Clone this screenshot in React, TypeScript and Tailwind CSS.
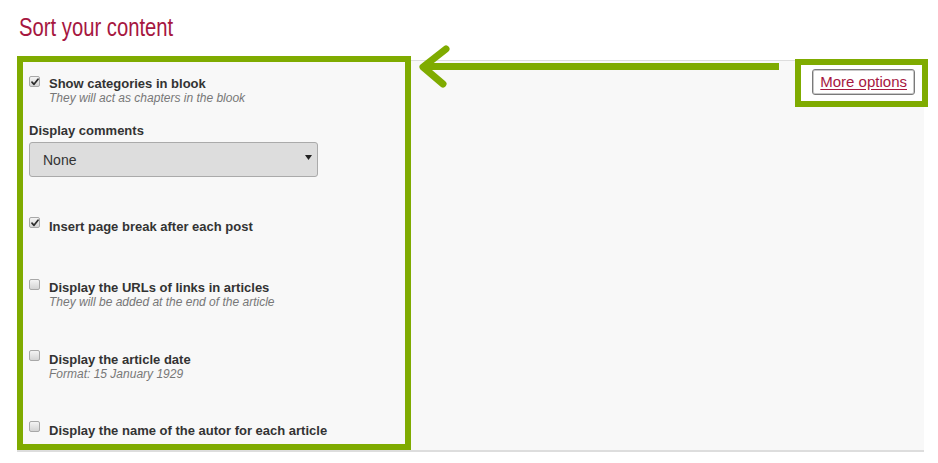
import React from "react";

const GREEN = "#7fab00";

function Box({ checked, offset }: { checked?: boolean; offset: string }) {
  return (
    <span
      className={`relative shrink-0 w-[11px] h-[11px] rounded-[2px] border border-[#a8a8a8] bg-gradient-to-b from-[#f4f4f4] to-[#d4d4d4] ${offset}`}
    >
      {checked && (
        <svg className="absolute left-[1px] top-[1px]" width="8" height="8" viewBox="0 0 8 8">
          <path d="M1 4.2 L3 6.3 L7 1.2" fill="none" stroke="#2b2b2b" strokeWidth="1.7" strokeLinecap="round" strokeLinejoin="round" />
        </svg>
      )}
    </span>
  );
}

function Opt({
  label,
  hint,
  checked,
  offset,
  mt,
}: {
  label: string;
  hint?: string;
  checked?: boolean;
  offset: string;
  mt: string;
}) {
  return (
    <div className={`flex items-start gap-[9px] ${mt}`}>
      <Box checked={checked} offset={offset} />
      <div>
        <div className="text-[13px] leading-[15px] font-bold text-[#333]">{label}</div>
        {hint && <div className="text-[12px] leading-[14px] italic text-[#777]">{hint}</div>}
      </div>
    </div>
  );
}

export default function App() {
  return (
    <div className="relative w-[938px] h-[463px] bg-white overflow-hidden font-['Liberation_Sans',Arial,sans-serif]">
      <h1 className="pl-[19px] pt-[12px] text-[25px] leading-[30px] font-normal text-[#a6173f]">
        <span className="inline-block origin-left scale-x-[0.81]">Sort your content</span>
      </h1>
      <div className="ml-[17px] mt-[18px] w-[907px] h-[392px] bg-[#f8f8f8] border-t border-b-2 border-[#dddddd] flex">
        <div className="w-[394px] pl-[12px] pt-[15px] flex flex-col">
          <Opt
            label="Show categories in blook"
            hint="They will act as chapters in the blook"
            checked
            offset="mt-0"
            mt="mt-0"
          />
          <div className="mt-[18px] text-[13px] leading-[15px] font-bold text-[#333]">Display comments</div>
          <div className="mt-[4px] w-[289px] h-[35px] rounded-[3px] border border-[#aaaaaa] bg-[#dddddd] flex items-center justify-between pl-[13px] pr-[5px]">
            <span className="text-[14px] text-[#333] mt-[1px]">None</span>
            <svg width="7" height="6" viewBox="0 0 7 6" className="-mt-[4px]">
              <path d="M0 0 H7 L3.5 5 Z" fill="#222" />
            </svg>
          </div>
          <Opt label="Insert page break after each post" checked offset="-mt-[2px]" mt="mt-[42px]" />
          <Opt
            label="Display the URLs of links in articles"
            hint="They will be added at the end of the article"
            offset="-mt-[1px]"
            mt="mt-[46px]"
          />
          <Opt
            label="Display the article date"
            hint="Format: 15 January 1929"
            offset="-mt-[2px]"
            mt="mt-[43px]"
          />
          <Opt label="Display the name of the autor for each article" offset="-mt-[2px]" mt="mt-[42px]" />
        </div>
        <div className="flex-1 flex justify-end items-start pt-[8px] pr-[9px]">
          <button className="relative z-10 h-[26px] px-[7px] rounded-[3px] border border-[#7a7a7a] bg-white text-[15px] leading-[24px] text-[#a6173f] underline underline-offset-2 shadow-[inset_0_0_0_1px_#c8c8c8]">
            More options
          </button>
        </div>
      </div>

      {/* annotations */}
      <div className="absolute left-[17px] top-[56px] w-[394px] h-[394px] border-[6px] border-[#7fab00]" />
      <div className="absolute left-[795px] top-[59px] w-[133px] h-[48px] border-[6px] border-[#7fab00] bg-white" />
      <svg className="absolute left-0 top-0 pointer-events-none" width="938" height="463">
        <path d="M779 66.5 H426" stroke={GREEN} strokeWidth="7" fill="none" />
        <path d="M446 49 L423 67 L443 84" stroke={GREEN} strokeWidth="7" fill="none" strokeLinecap="round" strokeLinejoin="round" />
      </svg>
    </div>
  );
}
